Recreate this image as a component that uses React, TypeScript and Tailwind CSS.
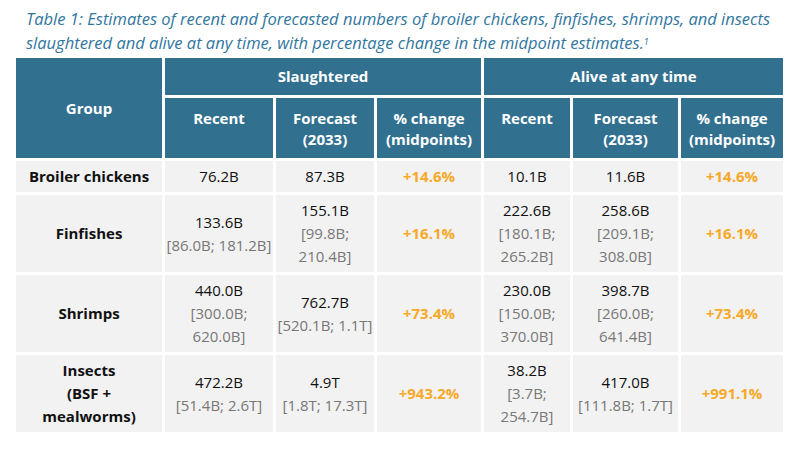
import React from 'react';

interface Row {
  group: string[];
  sRecent: string[];
  sForecast: string[];
  sChange: string;
  aRecent: string[];
  aForecast: string[];
  aChange: string;
}

// first line is the midpoint, the rest is the range (already wrapped as in the report)
const rows: Row[] = [
  {
    group: ['Broiler chickens'],
    sRecent: ['76.2B'],
    sForecast: ['87.3B'],
    sChange: '+14.6%',
    aRecent: ['10.1B'],
    aForecast: ['11.6B'],
    aChange: '+14.6%',
  },
  {
    group: ['Finfishes'],
    sRecent: ['133.6B', '[86.0B; 181.2B]'],
    sForecast: ['155.1B', '[99.8B;', '210.4B]'],
    sChange: '+16.1%',
    aRecent: ['222.6B', '[180.1B;', '265.2B]'],
    aForecast: ['258.6B', '[209.1B;', '308.0B]'],
    aChange: '+16.1%',
  },
  {
    group: ['Shrimps'],
    sRecent: ['440.0B', '[300.0B;', '620.0B]'],
    sForecast: ['762.7B', '[520.1B; 1.1T]'],
    sChange: '+73.4%',
    aRecent: ['230.0B', '[150.0B;', '370.0B]'],
    aForecast: ['398.7B', '[260.0B;', '641.4B]'],
    aChange: '+73.4%',
  },
  {
    group: ['Insects', '(BSF +', 'mealworms)'],
    sRecent: ['472.2B', '[51.4B; 2.6T]'],
    sForecast: ['4.9T', '[1.8T; 17.3T]'],
    sChange: '+943.2%',
    aRecent: ['38.2B', '[3.7B;', '254.7B]'],
    aForecast: ['417.0B', '[111.8B; 1.7T]'],
    aChange: '+991.1%',
  },
];

const Value = ({ v }: { v: string[] }) => (
  <td className="bg-[#f2f2f2] px-0 py-[4px] text-center align-middle whitespace-nowrap">
    {v.map((line, i) => (
      <div key={i} className={i === 0 ? 'text-[#111]' : 'text-[#777]'}>
        {line}
      </div>
    ))}
  </td>
);

const Change = ({ v }: { v: string }) => (
  <td className="bg-[#f2f2f2] px-0 py-[4px] text-center align-middle font-bold text-[#f7a928]">
    {v}
  </td>
);

const Head = ({ lines }: { lines: string[] }) => (
  <th className="bg-[#32708f] pt-[10px] text-center align-top leading-[21px] whitespace-nowrap">
    {lines.map((l, i) => (
      <div key={i}>{l}</div>
    ))}
  </th>
);

export default function App() {
  return (
    <div
      className="w-[804px] h-[456px] bg-white pt-[7px]"
      style={{ fontFamily: '"Open Sans", Lato, sans-serif' }}
    >
      <p className="pl-[26px] text-[16.5px] leading-[24px] italic text-[#3176a0] whitespace-nowrap">
        Table 1: Estimates of recent and forecasted numbers of broiler chickens, finfishes, shrimps, and insects
        <br />
        slaughtered and alive at any time, with percentage change in the midpoint estimates.
        <sup className="text-[9px]">1</sup>
      </p>
      <table className="ml-[13px] table-fixed border-separate border-spacing-[3px] text-[15px] leading-[23px]">
        <colgroup>
          <col className="w-[146px]" />
          <col className="w-[108px]" />
          <col className="w-[98px]" />
          <col className="w-[104px]" />
          <col className="w-[86px]" />
          <col className="w-[105px]" />
          <col className="w-[102px]" />
        </colgroup>
        <thead className="text-white font-bold">
          <tr className="h-[37px]">
            <th rowSpan={2} className="bg-[#32708f] text-center align-middle">
              Group
            </th>
            <th colSpan={3} className="bg-[#32708f] text-center align-middle">
              Slaughtered
            </th>
            <th colSpan={3} className="bg-[#32708f] text-center align-middle">
              Alive at any time
            </th>
          </tr>
          <tr className="h-[60px]">
            <Head lines={['Recent']} />
            <Head lines={['Forecast', '(2033)']} />
            <Head lines={['% change', '(midpoints)']} />
            <Head lines={['Recent']} />
            <Head lines={['Forecast', '(2033)']} />
            <Head lines={['% change', '(midpoints)']} />
          </tr>
        </thead>
        <tbody>
          {rows.map((r, i) => (
            <tr key={i}>
              <td className="bg-[#f2f2f2] px-0 py-[4px] text-center align-middle font-bold text-[#111] whitespace-nowrap">
                {r.group.map((g, j) => (
                  <div key={j}>{g}</div>
                ))}
              </td>
              <Value v={r.sRecent} />
              <Value v={r.sForecast} />
              <Change v={r.sChange} />
              <Value v={r.aRecent} />
              <Value v={r.aForecast} />
              <Change v={r.aChange} />
            </tr>
          ))}
        </tbody>
      </table>
    </div>
  );
}
